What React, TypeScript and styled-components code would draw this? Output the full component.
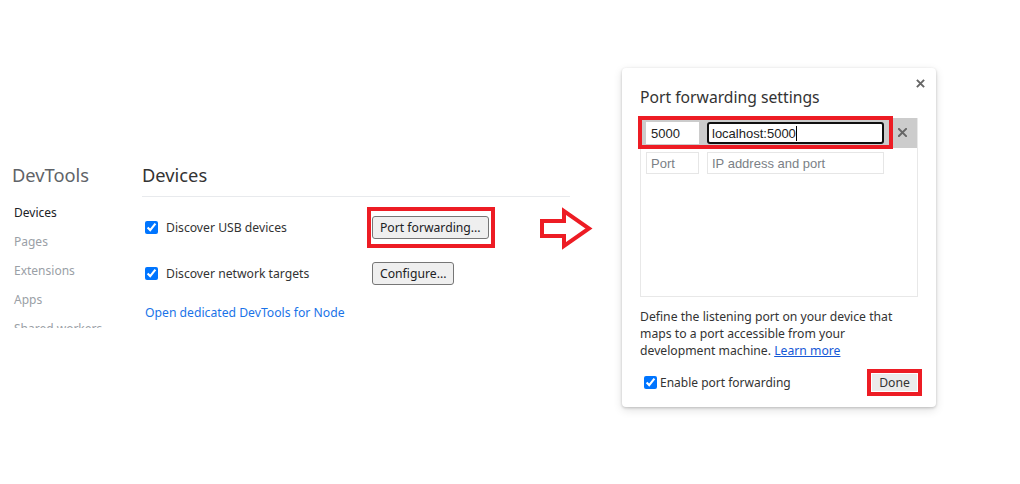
import styled, { createGlobalStyle } from 'styled-components';

const GlobalStyle = createGlobalStyle`
    body {
        margin: 0;
        background: #ffffff;
        font-family: 'Noto Sans', 'Open Sans', sans-serif;
        color: #202124;
    }
`;

const Page = styled.div`
    position: relative;
    display: flex;
    align-items: flex-start;
    width: 1020px;
    height: 484px;
    overflow: hidden;
`;

const Sidebar = styled.nav`
    width: 130px;
    padding-left: 12px;
    margin-top: 163px;
`;

const SidebarTitle = styled.div`
    font-size: 18.3px;
    line-height: 24px;
    color: #5f6368;
    margin-bottom: 10px;
`;

const NavList = styled.div`
    height: 130px;
    overflow: hidden;
    padding-top: 1px;
`;

const NavItem = styled.div<{ $active?: boolean }>`
    font-size: 12px;
    line-height: 29px;
    padding-left: 2px;
    white-space: nowrap;
    color: ${(p) => (p.$active ? '#202124' : '#9aa0a6')};
`;

const Main = styled.section`
    width: 428px;
    margin-top: 163px;
`;

const Heading = styled.div`
    font-size: 18.3px;
    line-height: 24px;
    color: #333333;
    padding-bottom: 9px;
    border-bottom: 1px solid #e8eaed;
`;

const Rows = styled.div`
    padding-top: 7px;
`;

const Row = styled.div`
    display: flex;
    align-items: center;
    height: 46px;
`;

const CheckLabel = styled.label<{ $width?: number }>`
    display: flex;
    align-items: center;
    gap: ${(p) => (p.$width ? '8px' : '3px')};
    width: ${(p) => (p.$width ? `${p.$width}px` : 'auto')};
    padding-left: ${(p) => (p.$width ? '3px' : '4px')};
    box-sizing: border-box;
    font-size: ${(p) => (p.$width ? '12.2px' : '12px')};
    color: #333333;

    & input {
        margin: 0;
        width: 13px;
        height: 13px;
        accent-color: #0075ff;
    }
`;

const Button = styled.button`
    height: 23px;
    padding: 0 7px;
    border: 1px solid #767676;
    border-radius: 3px;
    background: #efefef;
    font-family: 'Noto Sans', 'Open Sans', sans-serif;
    font-size: 12.2px;
    color: #202124;
`;

const Highlight = styled.span`
    display: inline-flex;
    border: 4px solid #ed1c24;
    padding: 5px 2px 5px 1px;
    margin-left: -5px;
    margin-right: -6px;
`;

const NodeLink = styled.a`
    display: block;
    margin-top: 8px;
    margin-left: 3px;
    font-size: 12.2px;
    line-height: 18px;
    color: #1a73e8;
    text-decoration: none;
`;

const Arrow = styled.svg`
    position: absolute;
    left: 536px;
    top: 207px;
`;

const Dialog = styled.div`
    position: relative;
    box-sizing: border-box;
    width: 314px;
    height: 339px;
    margin-top: 68px;
    margin-left: 52px;
    padding: 18px 18px 10px;
    background: #ffffff;
    border-radius: 4px;
    box-shadow: 0 1px 3px rgba(0, 0, 0, 0.2), 0 3px 10px rgba(0, 0, 0, 0.12);
`;

const CloseButton = styled.svg`
    position: absolute;
    top: 11px;
    right: 11px;
`;

const DialogTitle = styled.div`
    font-size: 15.7px;
    line-height: 22px;
    color: #333333;
    margin-bottom: 10px;
`;

const Table = styled.div`
    box-sizing: border-box;
    height: 179px;
    border: 1px solid #e8e8e8;
    border-top: none;
`;

const TableRow = styled.div<{ $selected?: boolean }>`
    display: flex;
    align-items: center;
    padding: 2px 0 3px 1px;
    background: ${(p) => (p.$selected ? '#cccccc' : 'transparent')};
`;

const InputGroup = styled.div<{ $highlighted?: boolean }>`
    display: flex;
    gap: 8px;
    padding: 2px 5px 1px 4px;
    outline: ${(p) => (p.$highlighted ? '4px solid #ed1c24' : 'none')};
`;

const Field = styled.div<{ $width: number; $focused?: boolean; $placeholder?: boolean }>`
    box-sizing: border-box;
    width: ${(p) => p.$width}px;
    height: 22px;
    display: flex;
    align-items: center;
    padding-left: ${(p) => (p.$focused ? '3px' : '4px')};
    font-family: 'Liberation Sans', Arial, sans-serif;
    font-size: 13px;
    background: #ffffff;
    color: ${(p) => (p.$placeholder ? '#7b7f86' : '#222222')};
    border: ${(p) =>
        p.$focused ? '2px solid #101010' : p.$placeholder ? '1px solid #e6e6e6' : '1px solid #ffffff'};
    border-radius: ${(p) => (p.$focused ? '3px' : '0')};
`;

const Caret = styled.span`
    display: inline-block;
    width: 1px;
    height: 15px;
    background: #000000;
`;

const DeleteCell = styled.div`
    flex: 1;
    display: flex;
    justify-content: center;
    padding-right: 2px;
`;

const Description = styled.p`
    margin: 11px 0 0;
    font-size: 12.2px;
    line-height: 17px;
    color: #333333;

    & a {
        color: #1558d6;
        text-decoration: underline;
    }
`;

const Footer = styled.div`
    display: flex;
    justify-content: space-between;
    align-items: center;
    margin-top: 10px;
`;

const DoneHighlight = styled.span`
    display: inline-flex;
    border: 4px solid #ed1c24;
    padding: 1px;
    margin-right: -4px;
`;

const DoneButton = styled.button`
    height: 17px;
    width: 45px;
    padding: 0;
    border: none;
    background: #ebebeb;
    font-family: 'Noto Sans', 'Open Sans', sans-serif;
    font-size: 12.2px;
    line-height: 17px;
    color: #333333;
`;

function Cross({ size, color }: { size: number; color: string }) {
    return (
        <svg width={size} height={size} viewBox="0 0 10 10">
            <path d="M1 1 L9 9 M9 1 L1 9" stroke={color} strokeWidth="2.2" strokeLinecap="square" />
        </svg>
    );
}

const navItems = ['Devices', 'Pages', 'Extensions', 'Apps', 'Shared workers'];

export default function App() {
    return (
        <>
            <GlobalStyle />
            <Page>
                <Sidebar>
                    <SidebarTitle>DevTools</SidebarTitle>
                    <NavList>
                        {navItems.map((item, i) => (
                            <NavItem key={item} $active={i === 0}>
                                {item}
                            </NavItem>
                        ))}
                    </NavList>
                </Sidebar>

                <Main>
                    <Heading>Devices</Heading>
                    <Rows>
                        <Row>
                            <CheckLabel $width={230}>
                                <input type="checkbox" checked readOnly />
                                Discover USB devices
                            </CheckLabel>
                            <Highlight>
                                <Button>Port forwarding...</Button>
                            </Highlight>
                        </Row>
                        <Row>
                            <CheckLabel $width={230}>
                                <input type="checkbox" checked readOnly />
                                Discover network targets
                            </CheckLabel>
                            <Button>Configure...</Button>
                        </Row>
                    </Rows>
                    <NodeLink href="#">Open dedicated DevTools for Node</NodeLink>
                </Main>

                <Arrow width="60" height="44" viewBox="0 0 60 44">
                    <polygon
                        points="6,14 28,14 28,4 53,21.5 28,39 28,29 6,29"
                        fill="none"
                        stroke="#ed1c24"
                        strokeWidth="4"
                    />
                </Arrow>

                <Dialog>
                    <CloseButton width="9" height="9" viewBox="0 0 10 10">
                        <path d="M1 1 L9 9 M9 1 L1 9" stroke="#666666" strokeWidth="2.2" />
                    </CloseButton>
                    <DialogTitle>Port forwarding settings</DialogTitle>
                    <Table>
                        <TableRow $selected>
                            <InputGroup $highlighted>
                                <Field $width={53}>5000</Field>
                                <Field $width={177} $focused>
                                    localhost:5000
                                    <Caret />
                                </Field>
                            </InputGroup>
                            <DeleteCell>
                                <Cross size={9} color="#666666" />
                            </DeleteCell>
                        </TableRow>
                        <TableRow>
                            <InputGroup>
                                <Field $width={53} $placeholder>
                                    Port
                                </Field>
                                <Field $width={177} $placeholder>
                                    IP address and port
                                </Field>
                            </InputGroup>
                        </TableRow>
                    </Table>
                    <Description>
                        Define the listening port on your device that
                        <br />
                        maps to a port accessible from your
                        <br />
                        development machine. <a href="#">Learn more</a>
                    </Description>
                    <Footer>
                        <CheckLabel>
                            <input type="checkbox" checked readOnly />
                            Enable port forwarding
                        </CheckLabel>
                        <DoneHighlight>
                            <DoneButton>Done</DoneButton>
                        </DoneHighlight>
                    </Footer>
                </Dialog>
            </Page>
        </>
    );
}
